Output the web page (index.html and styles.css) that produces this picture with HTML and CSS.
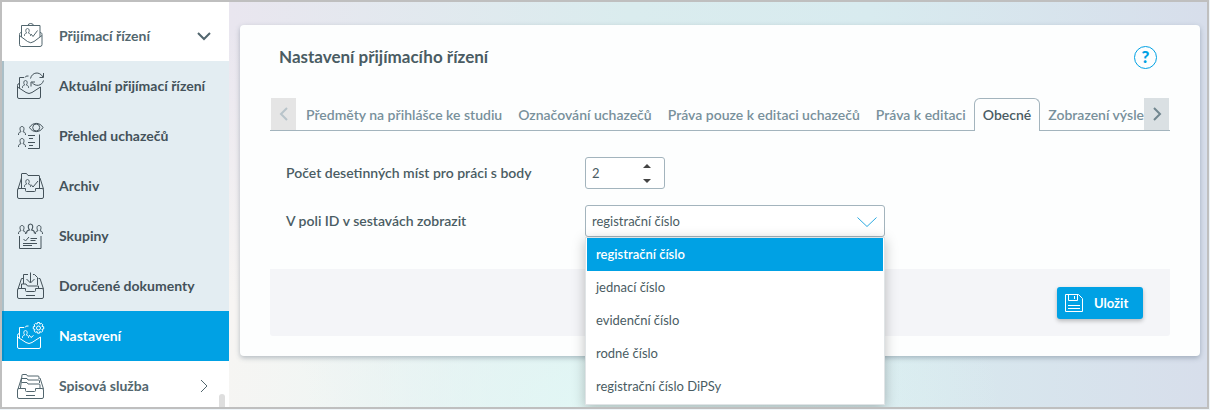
FILE: index.html
```html
<!DOCTYPE html>
<html lang="cs">
<head>
  <meta charset="UTF-8" />
  <meta name="viewport" content="width=device-width, initial-scale=1.0"/>
  <title>Nastavení přijímacího řízení</title>
  <link rel="stylesheet" href="styles.css">
</head>
<body>
  <svg class="defs" aria-hidden="true">
    <symbol id="person" viewBox="0 0 8 9">
      <path d="M.5 9c0-2.300.4-2.600 2.500-3.300C1.500 3.800 1.600.5 4 .5s2.500 3.300 1 5.200C7.100 6.400 7.500 6.700 7.500 9"/>
    </symbol>
    <symbol id="tray" viewBox="0 0 28 28">
      <path d="M8.500 16.500H2q-1.500 0-1.500 1.500v7q0 1.500 1.500 1.500h23q1.500 0 1.500-1.500v-7q0-1.500-1.500-1.500h-6.500v2q0 1-1 1h-8q-1 0-1-1z"/>
    </symbol>
    <symbol id="letter" viewBox="0 0 28 28">
      <path d="M2.500 11.500q-2 0-2 2v11.500q0 1.500 1.500 1.500h20q1.500 0 1.500-1.500V15M2.500 16.500v-11H7M8 5.500q.5-2 3.500-1.500M.5 15l8.500 5.500q3 2 6 0l8.500-5.500"/>
      <use href="#person" x="5" y="8" width="7" height="8"/>
    </symbol>
  </svg>

  <div class="frame">
    <nav class="sidebar">
      <a class="item" href="#">
        <svg class="icon" viewBox="0 0 28 28">
          <path d="M4.500 10.500c-1.500 0-2 .8-2 2v10q0 2 2 2h18.500q2 0 2-2v-10c0-1.200-.5-2-2-2M4.500 15V3.500h18.500V15M2.500 13.500l8 6q3.300 2.500 6.500 0l8-6M11 3.500q0-2 2.700-2t2.700 2"/>
          <use href="#person" x="7" y="6" width="7" height="8"/>
          <path d="M14 12l2 2.500 4.500-6"/>
        </svg>
        <span>Přijímací řízení</span>
        <svg class="arrow bold" viewBox="0 0 16 16"><path d="M2 5l6 6 6-6"/></svg>
      </a>
      <div class="submenu">
        <a class="item" href="#">
          <svg class="icon" viewBox="0 0 28 28">
            <use href="#letter"/>
            <path d="M13.500 6.500C15 0 22.500-1 26 5M26.500 1v4.500h-4M26.500 8.500C25 14 18.500 15 15 10.500M14 14.500v-4.500h4"/>
          </svg>
          <span>Aktuální přijímací řízení</span>
        </a>
        <a class="item" href="#">
          <svg class="icon" viewBox="0 0 28 28">
            <use href="#person" x="1" y="4" width="8" height="9"/>
            <use href="#person" x="1" y="16" width="8" height="9"/>
            <path d="M12.500 5.500c3-5.500 10.500-5.500 13.500 0-3 5.500-10.500 5.500-13.500 0z"/>
            <circle cx="19.200" cy="5.500" r="3.500"/>
            <path d="M11 13.500h7M22.500 12.500v14H11M12 16.500h4M11 20.500h7M12 23.500h4"/>
          </svg>
          <span>Přehled uchazečů</span>
        </a>
        <a class="item" href="#">
          <svg class="icon" viewBox="0 0 28 28">
            <use href="#tray"/>
            <path d="M1 17L4.500 6M26.500 17L23 6M4.500 16V2q0-.5.5-.5h4.500L11 3.500h11q.5 0 .5.500v12"/>
            <use href="#person" x="7" y="7" width="7" height="8"/>
            <path d="M14 12.500l2 2.500 5-6"/>
          </svg>
          <span>Archiv</span>
        </a>
        <a class="item" href="#">
          <svg class="icon" viewBox="0 0 28 28">
            <use href="#person" x="1" y="3" width="8" height="9"/>
            <use href="#person" x="9" y="1" width="9" height="11"/>
            <use href="#person" x="18" y="3" width="8" height="9"/>
            <path d="M2.500 14v12.500h21.500V14M6.500 17l2 2 3.500-4M13.500 16.500H20M13.500 18.500h5M6 21.500h14M6 23.500h9"/>
          </svg>
          <span>Skupiny</span>
        </a>
        <a class="item" href="#">
          <svg class="icon" viewBox="0 0 28 28">
            <use href="#tray"/>
            <path d="M9 23.500h9M1 17L4.500 6.500h1.500M26.500 17L23 6.500h-1.500M4.500 16v-4H9l1.500 2h11v2M6.500 12V2.500h4.500M16 2.500h1.500l3 3V13M13.500.5v10M9.500 7l4 4 4-4"/>
          </svg>
          <span>Doručené dokumenty</span>
        </a>
        <a class="item active" href="#" aria-current="page">
          <svg class="icon" viewBox="0 0 28 28">
            <use href="#letter"/>
            <path d="M12 13l2 2.500 2.500-2"/>
            <circle cx="21.500" cy="6" r="2"/>
            <path d="M20.500.5h2l.3 1.700 1.500-.9 1.500 1.500-.9 1.500 1.800.4v2.300l-1.800.4.9 1.500-1.500 1.500-1.500-.9-.3 1.700h-2l-.4-1.700-1.500.9-1.500-1.500.9-1.500-1.700-.4V4.700l1.700-.4-.9-1.500 1.500-1.500 1.500.9z"/>
          </svg>
          <span>Nastavení</span>
        </a>
      </div>
      <a class="item" href="#">
        <svg class="icon" viewBox="0 0 28 28">
          <use href="#tray"/>
          <path d="M9 23.500h9M1 17L4.500 6M26.500 17L23 6M3.500 16L5 3q0-.5.5-.5h4l1 1.500H21q1 0 1 1v2M5 6.500h5l1 1.500h10.500q1 0 1 1v2M4.500 10.500h5.500l1 1.500h11q1 0 1 1v3"/>
        </svg>
        <span>Spisová služba</span>
        <svg class="arrow" viewBox="0 0 16 16"><path d="M5 2l6 6-6 6"/></svg>
      </a>
      <div class="scroll-thumb"></div>
    </nav>

    <main class="content">
      <section class="card">
        <header class="card-header">
          <h1>Nastavení přijímacího řízení</h1>
          <button class="help" type="button" aria-label="Nápověda">?</button>
        </header>

        <div class="tabs">
          <button class="tab-scroll" type="button" aria-label="Předchozí" disabled>
            <svg viewBox="0 0 16 16"><path d="M11 2L5 8l6 6"/></svg>
          </button>
          <div class="tab-list" role="tablist">
            <button class="tab" type="button" role="tab">Předměty na přihlášce ke studiu</button>
            <button class="tab" type="button" role="tab">Označování uchazečů</button>
            <button class="tab" type="button" role="tab">Práva pouze k editaci uchazečů</button>
            <button class="tab" type="button" role="tab">Práva k editaci</button>
            <button class="tab selected" type="button" role="tab" aria-selected="true">Obecné</button>
            <button class="tab" type="button" role="tab">Zobrazení výsledků</button>
          </div>
          <button class="tab-scroll next" type="button" aria-label="Další">
            <svg viewBox="0 0 16 16"><path d="M5 2l6 6-6 6"/></svg>
          </button>
        </div>

        <form class="form">
          <div class="row">
            <label for="decimals">Počet desetinných míst pro práci s body</label>
            <div class="number">
              <input type="number" id="decimals" value="2">
              <div class="spin">
                <button type="button" aria-label="Zvýšit"><svg viewBox="0 0 8 4"><path d="M0 4l4-4 4 4z"/></svg></button>
                <button type="button" aria-label="Snížit"><svg viewBox="0 0 8 4"><path d="M0 0l4 4 4-4z"/></svg></button>
              </div>
            </div>
          </div>
          <div class="row">
            <label for="id-field">V poli ID v sestavách zobrazit</label>
            <div class="dropdown">
              <select id="id-field">
                <option>registrační číslo</option>
                <option>jednací číslo</option>
                <option>evidenční číslo</option>
                <option>rodné číslo</option>
                <option>registrační číslo DiPSy</option>
              </select>
              <svg class="caret" viewBox="0 0 20 10"><path d="M.5.5L10 9.500 19.500.5"/></svg>
              <ul class="options" role="listbox">
                <li class="chosen" role="option" aria-selected="true">registrační číslo</li>
                <li role="option">jednací číslo</li>
                <li role="option">evidenční číslo</li>
                <li role="option">rodné číslo</li>
                <li role="option">registrační číslo DiPSy</li>
              </ul>
            </div>
          </div>
          <div class="actions">
            <button class="save" type="submit">
              <svg viewBox="0 0 20 20"><path d="M1.500 1.500h13l4 4v13h-17zM4.500 1.500v6h9v-6M10.500 3v3M4 12.500h12M4 15.500h12"/></svg>
              <span>Uložit</span>
            </button>
          </div>
        </form>
      </section>
    </main>
  </div>
</body>
</html>
```

FILE: styles.css
```css
* { box-sizing: border-box; }
html, body {
  margin: 0;
  padding: 0;
  height: 100%;
}
body {
  padding: 0 1px 1px 0;
  background-color: #eef4f8;
  font-family: Lato, "Noto Sans", sans-serif;
  font-size: 13px;
  line-height: 20px;
  color: #4a5c63;
  overflow: hidden;
}
button, input, select {
  font: inherit;
  color: inherit;
  margin: 0;
}
button { cursor: pointer; }
.defs {
  position: absolute;
  width: 0;
  height: 0;
}

.frame {
  height: 100%;
  display: flex;
  border: 2px solid #bfbfbf;
  overflow: hidden;
  background:
    radial-gradient(ellipse 400px 240px at 50% 100%, #e2f7f5, rgba(226, 247, 245, 0)),
    radial-gradient(ellipse 420px 380px at 15% 100%, #f7f5f3 30%, rgba(247, 245, 243, 0)),
    linear-gradient(to right, #e9e6ef 19%, #daecee 52%, #d8ebef 72%, #d7deeb 100%);
}

/* sidebar */
.sidebar {
  position: relative;
  flex: none;
  width: 227px;
  padding-top: 9px;
  background-color: #fff;
}
.item {
  display: flex;
  align-items: center;
  gap: 14px;
  height: 50px;
  padding: 0 17px 0 15px;
  font-size: 14px;
  font-weight: bold;
  color: #52666e;
  text-decoration: none;
  white-space: nowrap;
}
.item span { flex: 1; }
.submenu {
  background-color: #e3edf2;
  box-shadow: inset 2px 0 #aabfc8;
}
.submenu .item { color: #44525a; }
.submenu .item.active {
  background-color: #00a1e4;
  box-shadow: inset 2px 0 #0092cf;
  color: #fff;
}
svg {
  fill: none;
  stroke: currentColor;
}
.icon {
  flex: none;
  width: 28px;
  height: 28px;
}
.arrow {
  width: 16px;
  height: 16px;
}
.arrow.bold { stroke-width: 2; }
.scroll-thumb {
  position: absolute;
  right: 4px;
  bottom: 0;
  width: 6px;
  height: 13px;
  border-radius: 3px 3px 0 0;
  background-color: #dedede;
}

/* card */
.content {
  flex: 1;
  min-width: 0;
  padding: 23px 7px 0 11px;
}
.card {
  padding: 16px 30px 20px;
  border-radius: 4px;
  background-color: #fdfefe;
  box-shadow: 0 2px 5px rgba(60, 80, 100, 0.35);
}
.card-header {
  display: flex;
  justify-content: space-between;
  align-items: center;
  height: 32px;
  padding: 0 13px 0 9px;
}
.card-header h1 {
  margin: 0;
  font-size: 17px;
  line-height: 24px;
}
.help {
  width: 23px;
  height: 23px;
  padding: 0;
  border: 1px solid #00a1e4;
  border-radius: 50%;
  background: none;
  color: #00a1e4;
  font-size: 17px;
  font-weight: 900;
  line-height: 20px;
}

/* tabs */
.tabs {
  display: flex;
  height: 33px;
  margin-top: 25px;
  padding: 0 1px;
  box-shadow: inset 0 -1px #a3b4bd;
}
.tab-scroll {
  flex: none;
  display: flex;
  align-items: center;
  justify-content: center;
  width: 25px;
  height: 32px;
  padding: 0;
  border: 0;
  background-color: #e5e5e5;
  color: #b8c4ca;
}
.tab-scroll svg {
  width: 16px;
  height: 16px;
  stroke-width: 2;
}
.tab-scroll.next {
  background-color: #dae0e3;
  color: #71868f;
}
.tab-list {
  flex: 1;
  min-width: 0;
  display: flex;
  padding-left: 2px;
  overflow: hidden;
}
.tab {
  flex: none;
  padding: 0 8px;
  border: 0;
  background: none;
  color: #78909b;
  font-size: 14px;
  font-weight: 600;
  white-space: nowrap;
}
.tab.selected {
  border: 1px solid #a3b4bd;
  border-bottom: 0;
  border-radius: 6px 6px 0 0;
  background-color: #fdfefe;
  color: #4a5c63;
}

/* form */
.form { padding-top: 26px; }
.row {
  display: flex;
  align-items: center;
  padding-left: 16px;
  margin-bottom: 16px;
}
.row label {
  width: 299px;
  font-size: 14px;
  font-weight: 600;
}
.number {
  display: flex;
  width: 80px;
  height: 32px;
  border: 1px solid #a3b4bd;
  border-radius: 3px;
  background-color: #fff;
}
.number input {
  flex: 1;
  min-width: 0;
  padding: 0 6px;
  border: 0;
  background: none;
  appearance: textfield;
}
.number input::-webkit-inner-spin-button { display: none; }
.spin {
  display: flex;
  flex-direction: column;
  justify-content: space-between;
  padding: 6px 13px 5px 0;
}
.spin button {
  display: flex;
  padding: 0;
  border: 0;
  background: none;
}
.spin svg {
  width: 8px;
  height: 4px;
  fill: #444;
  stroke: none;
}
.dropdown {
  position: relative;
  width: 300px;
}
.dropdown select {
  display: block;
  width: 100%;
  height: 32px;
  padding: 0 6px;
  border: 1px solid #a3b4bd;
  border-radius: 3px;
  background-color: #fff;
  appearance: none;
}
.caret {
  position: absolute;
  top: 12px;
  right: 8px;
  width: 20px;
  height: 10px;
  color: #2ba9e0;
  pointer-events: none;
}
.options {
  position: absolute;
  top: 100%;
  left: 0;
  right: 0;
  margin: 0;
  padding: 0 1px 1px;
  border: 1px solid #e0e4e6;
  background-color: #fff;
  box-shadow: 0 3px 12px rgba(0, 0, 0, 0.25);
  list-style: none;
}
.options li {
  padding: 0 9px;
  line-height: 33px;
}
.options .chosen {
  background-color: #00a1e4;
  color: #fff;
  font-weight: 600;
}
.actions {
  display: flex;
  justify-content: flex-end;
  margin-top: 32px;
  padding: 18px 27px 17px;
  border-radius: 0 0 3px 3px;
  background-color: #f4f5f8;
}
.save {
  display: flex;
  align-items: center;
  gap: 10px;
  width: 86px;
  height: 32px;
  padding: 0 7px;
  border: 0;
  border-radius: 3px;
  background-color: #00a1e4;
  box-shadow: 0 2px 4px rgba(0, 0, 0, 0.25);
  color: #fff;
  font-weight: bold;
}
.save svg {
  width: 20px;
  height: 20px;
}
```
